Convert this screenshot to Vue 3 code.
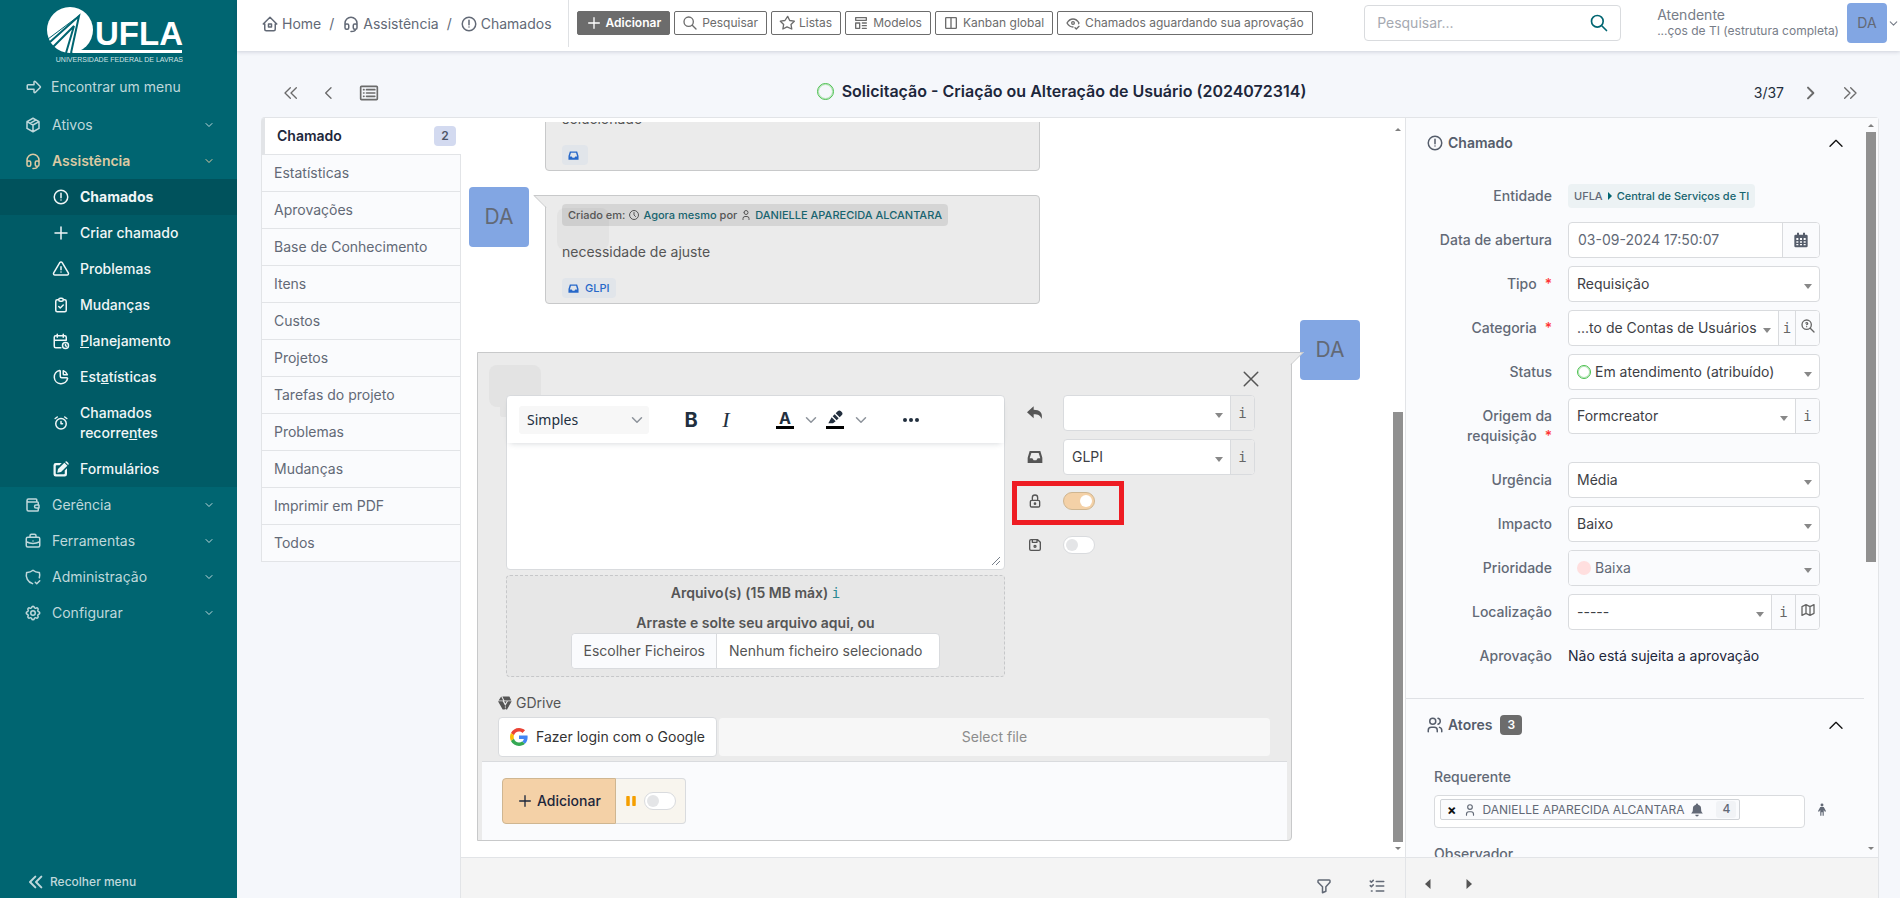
<script setup>
import { h, ref } from 'vue'

const shapes = {
  home: 'M5 12H3l9-9l9 9h-2M5 12v7a2 2 0 0 0 2 2h10a2 2 0 0 0 2-2v-7M10 12h4v4h-4z',
  headset: 'M4 14v-3a8 8 0 1 1 16 0v3M18 19c0 1.657-2.686 3-6 3M4 14a2 2 0 0 1 2-2h1a2 2 0 0 1 2 2v3a2 2 0 0 1-2 2H6a2 2 0 0 1-2-2zM15 14a2 2 0 0 1 2-2h1a2 2 0 0 1 2 2v3a2 2 0 0 1-2 2h-1a2 2 0 0 1-2-2z',
  alert: 'M3 12a9 9 0 1 0 18 0a9 9 0 1 0-18 0M12 7v6M12 16h.01',
  arrow: 'M4 9h8V5.414a1 1 0 0 1 1.707-.707l6.586 6.586a1 1 0 0 1 0 1.414l-6.586 6.586A1 1 0 0 1 12 18.586V15H4a1 1 0 0 1-1-1v-4a1 1 0 0 1 1-1z',
  package: 'M12 3l8 4.5v9L12 21l-8-4.5v-9zM12 12l8-4.5M12 12v9M12 12L4 7.5M16 5.25l-8 4.5',
  plus: 'M12 4v16M4 12h16',
  triangle: 'M12 9v4M10.363 3.591L2.257 17.125a1.914 1.914 0 0 0 1.636 2.871h16.214a1.914 1.914 0 0 0 1.636-2.87L13.637 3.59a1.914 1.914 0 0 0-3.274 0zM12 16h.01',
  clipboard: 'M9 5H7a2 2 0 0 0-2 2v12a2 2 0 0 0 2 2h10a2 2 0 0 0 2-2V7a2 2 0 0 0-2-2h-2M9 5a2 2 0 0 1 2-2h2a2 2 0 0 1 0 4h-2a2 2 0 0 1-2-2zM9 14l2 2l4-4',
  calendar: 'M11.795 21H5a2 2 0 0 1-2-2V7a2 2 0 0 1 2-2h12a2 2 0 0 1 2 2v4M14 18a4 4 0 1 0 8 0a4 4 0 1 0-8 0M15 3v4M7 3v4M3 11h16M18 16.5V18l1 1',
  pie: 'M10 3.2A9 9 0 1 0 20.8 14a1 1 0 0 0-1-1H13a2 2 0 0 1-2-2V4a.9.9 0 0 0-1-.8M15 3.5A9 9 0 0 1 20.5 9H16a1 1 0 0 1-1-1z',
  alarm: 'M5 13a7 7 0 1 0 14 0a7 7 0 1 0-14 0M12 10v3h2M7 4L4.25 6M17 4l2.75 2',
  wallet: 'M17 8V5a1 1 0 0 0-1-1H6a2 2 0 0 0 0 4h12a1 1 0 0 1 1 1v3m0 4v3a1 1 0 0 1-1 1H6a2 2 0 0 1-2-2V6M20 12v4h-4a2 2 0 0 1 0-4z',
  briefcase: 'M3 9a2 2 0 0 1 2-2h14a2 2 0 0 1 2 2v9a2 2 0 0 1-2 2H5a2 2 0 0 1-2-2zM8 7V5a2 2 0 0 1 2-2h4a2 2 0 0 1 2 2v2M12 12v.01M3 13a20 20 0 0 0 18 0',
  shield: 'M11.46 20.846A12 12 0 0 1 3.5 6A12 12 0 0 0 12 3a12 12 0 0 0 8.5 3a12 12 0 0 1-.09 7.06M15 19l2 2l4-4',
  gear: 'M10.325 4.317c.426-1.756 2.924-1.756 3.35 0a1.724 1.724 0 0 0 2.573 1.066c1.543-.94 3.31.826 2.37 2.37a1.724 1.724 0 0 0 1.065 2.572c1.756.426 1.756 2.924 0 3.35a1.724 1.724 0 0 0-1.066 2.573c.94 1.543-.826 3.31-2.37 2.37a1.724 1.724 0 0 0-2.572 1.065c-.426 1.756-2.924 1.756-3.35 0a1.724 1.724 0 0 0-2.573-1.066c-1.543.94-3.31-.826-2.37-2.37a1.724 1.724 0 0 0-1.065-2.572c-1.756-.426-1.756-2.924 0-3.35a1.724 1.724 0 0 0 1.066-2.573c-.94-1.543.826-3.31 2.37-2.37c1 .608 2.296.07 2.572-1.065zM9 12a3 3 0 1 0 6 0a3 3 0 0 0-6 0',
  search: 'M3 10a7 7 0 1 0 14 0a7 7 0 1 0-14 0M21 21l-6-6',
  star: 'M12 17.75l-6.172 3.245l1.179-6.873l-5-4.867l6.9-1L12.993 2l3.086 6.253l6.9 1l-5 4.867l1.179 6.873z',
  template: 'M4 4h16v4H4zM4 12h6v8H4zM14 12h6M14 16h6M14 20h6',
  columns: 'M5 4h14a1 1 0 0 1 1 1v14a1 1 0 0 1-1 1H5a1 1 0 0 1-1-1V5a1 1 0 0 1 1-1zM12 4v16',
  eye: 'M10 12a2 2 0 1 0 4 0a2 2 0 0 0-4 0M12 18c-3.6 0-6.6-2-9-6c2.4-4 5.4-6 9-6c3.6 0 6.6 2 9 6l-.7 1.1M15 19l2 2l4-4',
  down: 'M6 9l6 6l6-6',
  up: 'M3 17l9-9l9 9',
  left: 'M15 4l-8 8l8 8',
  right: 'M9 4l8 8l-8 8',
  first: 'M11 4l-8 8l8 8M20 4l-8 8l8 8',
  last: 'M4 4l8 8l-8 8M13 4l8 8l-8 8',
  list: 'M3 4h18a1 1 0 0 1 1 1v14a1 1 0 0 1-1 1H3a1 1 0 0 1-1-1V5a1 1 0 0 1 1-1zM9 8h10M9 12h10M9 16h10M5.5 8h.5M5.5 12h.5M5.5 16h.5',
  close: 'M3 3l18 18M21 3L3 21',
  user: 'M8 7a4 4 0 1 0 8 0a4 4 0 0 0-8 0M6 21v-2a4 4 0 0 1 4-4h4a4 4 0 0 1 4 4v2',
  users: 'M5 7a4 4 0 1 0 8 0a4 4 0 1 0-8 0M3 21v-2a4 4 0 0 1 4-4h4a4 4 0 0 1 4 4v2M16 3.13a4 4 0 0 1 0 7.75M21 21v-2a4 4 0 0 0-3-3.85',
  clock: 'M3 12a9 9 0 1 0 18 0a9 9 0 1 0-18 0M12 7v5l3 3',
  lock: 'M5 13a2 2 0 0 1 2-2h10a2 2 0 0 1 2 2v6a2 2 0 0 1-2 2H7a2 2 0 0 1-2-2zM11 16a1 1 0 1 0 2 0a1 1 0 0 0-2 0M8 11V7a4 4 0 1 1 8 0v4',
  save: 'M6 4h10l4 4v10a2 2 0 0 1-2 2H6a2 2 0 0 1-2-2V6a2 2 0 0 1 2-2M10.500 14a1.500 1.500 0 1 0 3 0a1.500 1.500 0 1 0-3 0M15 4v4H8V4',
  filter: 'M5 4h14a1 1 0 0 1 1 1v2l-5.500 6v6L10 21v-8L4 7V5a1 1 0 0 1 1-1z',
  tasks: 'M3 5.500L4.500 7L7 4.500M3 11.500L4.500 13L7 10.500M4.500 18.500h1M11 6h10M11 12h10M11 18.500h10',
  zoomq: 'M3 10a7 7 0 1 0 14 0a7 7 0 1 0-14 0M21 21l-6-6M10 13v.01M10 10a1.500 1.500 0 1 0-1.140-2.474',
  map: 'M3 7l6-3l6 3l6-3v13l-6 3l-6-3l-6 3zM9 4v13M15 7v13',
}
const solid = {
  inbox: 'M4 3h16l3 10v8H1V13zM6.500 6L4 14h4l2 3h4l2-3h4l-2.500-8z',
  reply: 'M10 2v5c9 0 14 4 12 14c-2-5-5-7-12-7v6L0 11z',
  calgrid: 'M6 1h3v3h6V1h3v3h2a2 2 0 0 1 2 2v15a2 2 0 0 1-2 2H4a2 2 0 0 1-2-2V6a2 2 0 0 1 2-2h2zM5 9v3h3V9zM10.500 9v3h3V9zM16 9v3h3V9zM5 14v2h3v-2zM10.500 14v2h3v-2zM16 14v2h3v-2zM5 18v2h3v-2zM10.500 18v2h3v-2zM16 18v2h3v-2z',
  bell: 'M12 1a2 2 0 0 1 2 2c4 1 5 4 5 7c0 5 1 6 3 8H2c2-2 3-3 3-8c0-3 1-6 5-7a2 2 0 0 1 2-2zM9 20h6a3 3 0 0 1-6 0z',
  person: 'M12 1a2.500 2.500 0 1 1 0 5a2.500 2.500 0 0 1 0-5zM9 7h6l4 7l-2 1l-2-3v10h-2v-6h-2v6H9V12l-2 3l-2-1z',
  edit: 'M5 4h8l-3 3H6a1 1 0 0 0-1 1v10a1 1 0 0 0 1 1h10a1 1 0 0 0 1-1v-4l3-3v8a3 3 0 0 1-3 3H5a3 3 0 0 1-3-3V7a3 3 0 0 1 3-3zM8 12l8.500-8.500l4 4L12 16l-5 1zM17.500 2.500c1-1 2-1 3 0l1 1c1 1 1 2 0 3z',
  drive: 'M5.500 1L9 7.500H1zM7.500 1h12l3.500 6.500H11zM0 9h8l5.500 10l-2 4H8zM23.500 9L15.500 23h-2l-2-4L17 9zM10.500 9h4.500l-2.200 4z',
  pencil: 'M2 20l5-9l6 6l-4 3zM8.500 9.500l3-3l6 6l-3 3zM13 5l3-3a3.500 3.500 0 0 1 5 0l1 1a3.500 3.500 0 0 1 0 5l-3 3z',
  tleft: 'M17 2v20L6 12z',
  tright: 'M7 2v20l11-10z',
  pause: 'M4 2h4a1.500 1.500 0 0 1 1.500 1.500v17A1.500 1.500 0 0 1 8 22H4a1.500 1.500 0 0 1-1.500-1.500v-17A1.500 1.500 0 0 1 4 2zM16 2h4a1.500 1.500 0 0 1 1.500 1.500v17A1.500 1.500 0 0 1 20 22h-4a1.500 1.500 0 0 1-1.500-1.500v-17A1.500 1.500 0 0 1 16 2z',
}

function Icon(props) {
  const fill = solid[props.name]
  return h('svg', {
    width: props.size || 18, height: props.size || 18, viewBox: '0 0 24 24', 'aria-hidden': 'true',
    fill: fill ? 'currentColor' : 'none', 'fill-rule': 'evenodd', stroke: fill ? 'none' : 'currentColor',
    'stroke-width': props.weight || 2, 'stroke-linecap': 'round', 'stroke-linejoin': 'round',
  }, [h('path', { d: fill || shapes[props.name] })])
}
Icon.props = ['name', 'size', 'weight']

const submenu = [
  { icon: 'alert', text: ['Chamados', '', ''], active: true },
  { icon: 'plus', text: ['Criar chamado', '', ''] },
  { icon: 'triangle', text: ['Problemas', '', ''] },
  { icon: 'clipboard', text: ['Mudanças', '', ''] },
  { icon: 'calendar', text: ['', 'P', 'lanejamento'] },
  { icon: 'pie', text: ['Est', 'a', 'tísticas'] },
  { icon: 'alarm', text: ['Chamados recorre', 'n', 'tes'] },
  { icon: 'edit', text: ['Formulários', '', ''] },
]
const lowerMenu = [
  { icon: 'wallet', text: 'Gerência' },
  { icon: 'briefcase', text: 'Ferramentas' },
  { icon: 'shield', text: 'Administração' },
  { icon: 'gear', text: 'Configurar' },
]
const actions = [
  { icon: 'plus', text: 'Adicionar', filled: true },
  { icon: 'search', text: 'Pesquisar' },
  { icon: 'star', text: 'Listas' },
  { icon: 'template', text: 'Modelos' },
  { icon: 'columns', text: 'Kanban global' },
  { icon: 'eye', text: 'Chamados aguardando sua aprovação' },
]
const tabs = ['Estatísticas', 'Aprovações', 'Base de Conhecimento', 'Itens', 'Custos', 'Projetos', 'Tarefas do projeto', 'Problemas', 'Mudanças', 'Imprimir em PDF', 'Todos']
const fields = [
  { id: 'tipo', label: 'Tipo', required: true, value: 'Requisição' },
  { id: 'categoria', label: 'Categoria', required: true, value: '...to de Contas de Usuários', info: 'narrow', extra: 'zoomq' },
  { id: 'status', label: 'Status', value: 'Em atendimento (atribuído)', dot: 'ring' },
  { id: 'origem', label: 'Origem da requisição', required: true, value: 'Formcreator', info: 'wide' },
  { id: 'urgencia', label: 'Urgência', value: 'Média' },
  { id: 'impacto', label: 'Impacto', value: 'Baixo' },
  { id: 'prioridade', label: 'Prioridade', value: 'Baixa', dot: 'pink', disabled: true },
  { id: 'local', label: 'Localização', value: '-----', info: 'wide', extra: 'map' },
]
const isPrivate = ref(true)
const saveTemplate = ref(false)
const pending = ref(false)
</script>

<template>
  <div class="app">
    <aside class="sidebar">
      <a href="#" class="logo" aria-label="UFLA">
        <svg width="136" height="56" viewBox="0 0 136 56">
          <circle cx="23" cy="23" r="23" fill="#fff" />
          <g fill="none" stroke="#006571" stroke-width="2">
            <path d="M3 35L32 9L24 46M6 40L27 19L19 46" />
            <path d="M1 32L33 8" stroke-width="1" />
          </g>
          <text x="48" y="38" class="logo-name">UFLA</text>
          <path d="M26 43h109v3H26z" fill="#fff" />
          <text x="136" y="55" text-anchor="end" class="logo-caption">UNIVERSIDADE FEDERAL DE LAVRAS</text>
        </svg>
      </a>
      <nav class="menu" aria-label="Principal">
        <a href="#" class="find"><Icon name="arrow" />Encontrar um menu</a>
        <a href="#" class="item"><Icon name="package" /><span>Ativos</span><Icon name="down" size="12" /></a>
        <a href="#" class="item current"><Icon name="headset" /><span>Assistência</span><Icon name="down" size="12" /></a>
        <div class="submenu">
          <a v-for="s in submenu" :key="s.icon" href="#" :class="{ active: s.active }">
            <Icon :name="s.icon" /><span class="subtext">{{ s.text[0] }}<u>{{ s.text[1] }}</u>{{ s.text[2] }}</span>
          </a>
        </div>
        <a v-for="m in lowerMenu" :key="m.text" href="#" class="item"><Icon :name="m.icon" /><span>{{ m.text }}</span><Icon name="down" size="12" /></a>
      </nav>
      <button class="collapse"><Icon name="first" size="16" weight="3" />Recolher menu</button>
    </aside>

    <div class="page">
      <header class="topbar">
        <nav class="crumbs" aria-label="Trilha">
          <a href="#"><Icon name="home" />Home</a><span>/</span>
          <a href="#"><Icon name="headset" />Assistência</a><span>/</span>
          <a href="#"><Icon name="alert" />Chamados</a>
        </nav>
        <div class="actions">
          <button v-for="a in actions" :key="a.text" :class="{ filled: a.filled }"><Icon :name="a.icon" size="16" />{{ a.text }}</button>
        </div>
        <form class="search" @submit.prevent>
          <input type="search" placeholder="Pesquisar..." aria-label="Pesquisar">
          <button aria-label="Buscar"><Icon name="search" size="20" /></button>
        </form>
        <a href="#" class="account">
          <span class="who"><span>Atendente</span><small>...ços de TI (estrutura completa)</small></span>
          <span class="avatar small">DA</span><Icon name="down" size="13" />
        </a>
      </header>

      <div class="pager">
        <div class="nav-left">
          <button aria-label="Primeiro"><Icon name="first" size="16" /></button>
          <button aria-label="Anterior"><Icon name="left" size="16" /></button>
          <button aria-label="Lista"><Icon name="list" size="20" /></button>
        </div>
        <h1><i class="ring"></i>Solicitação - Criação ou Alteração de Usuário (2024072314)</h1>
        <div class="nav-right">
          <span>3/37</span>
          <button aria-label="Próximo"><Icon name="right" size="16" weight="3" /></button>
          <button aria-label="Último"><Icon name="last" size="16" /></button>
        </div>
      </div>

      <main class="card">
        <nav class="tabs" aria-label="Seções">
          <a href="#" class="tab selected">Chamado <span>2</span></a>
          <a v-for="t in tabs" :key="t" href="#" class="tab">{{ t }}</a>
        </nav>

        <section class="timeline">
          <div class="scrollrow">
            <div class="feed">
              <article class="message">
                <div class="avatar blank"></div>
                <div class="bubble">
                  <p>solucionado</p>
                  <span class="source"><Icon name="inbox" size="11" /></span>
                </div>
              </article>
              <article class="message">
                <div class="avatar">DA</div>
                <div class="bubble pointed">
                  <i class="ghost"></i>
                  <svg class="pointer" width="14" height="14" viewBox="0 0 14 14"><path d="M0 0h14v13z" fill="#ebebeb" /><path d="M14 .5H1L13 12.500" fill="none" stroke="#c8c9ca" /></svg>
                  <div class="meta">Criado em: <Icon name="clock" size="12" /><a href="#">Agora mesmo</a> por <Icon name="user" size="12" /><a href="#">DANIELLE APARECIDA ALCANTARA</a></div>
                  <p>necessidade de ajuste</p>
                  <span class="source"><Icon name="inbox" size="11" />GLPI</span>
                </div>
              </article>
              <div class="reply">
                <form class="composer" @submit.prevent>
                  <i class="ghost"></i>
                  <svg class="pointer" width="14" height="14" viewBox="0 0 14 14"><path d="M14 0H0v13z" fill="#ebebeb" /><path d="M0 .5h13L1 12.500" fill="none" stroke="#c8c9ca" /></svg>
                  <div class="head"><button type="button" aria-label="Fechar"><Icon name="close" size="18" /></button></div>
                  <div class="body">
                    <div class="writing">
                      <div class="editor">
                        <div class="toolbar">
                          <div class="format"><select aria-label="Formato"><option>Simples</option></select><Icon name="down" size="18" /></div>
                          <button type="button" class="bold" aria-label="Negrito">B</button>
                          <button type="button" class="italic" aria-label="Itálico">I</button>
                          <button type="button" class="ink" aria-label="Cor do texto">A</button>
                          <button type="button" class="arrow" aria-label="Cores do texto"><Icon name="down" size="18" /></button>
                          <button type="button" class="ink" aria-label="Cor de fundo"><Icon name="pencil" size="16" /></button>
                          <button type="button" class="arrow" aria-label="Cores de fundo"><Icon name="down" size="18" /></button>
                          <button type="button" class="more" aria-label="Mais"><i></i><i></i><i></i></button>
                        </div>
                        <textarea aria-label="Descrição"></textarea>
                        <svg class="grip" width="10" height="10" viewBox="0 0 10 10"><path d="M1 9l8-8M5 9l4-4" stroke="#777f8a" fill="none" /></svg>
                      </div>
                      <div class="drop">
                        <strong>Arquivo(s) (15 MB máx) <span class="info">i</span></strong>
                        <strong>Arraste e solte seu arquivo aqui, ou</strong>
                        <div class="file"><button type="button">Escolher Ficheiros</button><span>Nenhum ficheiro selecionado</span></div>
                      </div>
                    </div>
                    <div class="options">
                      <div class="option"><Icon name="reply" size="16" />
                        <div class="group"><div class="pick"><select aria-label="Modelo"><option></option></select></div><button type="button" class="addon info">i</button></div>
                      </div>
                      <div class="option"><Icon name="inbox" size="16" />
                        <div class="group"><div class="pick"><select aria-label="Origem"><option>GLPI</option></select></div><button type="button" class="addon info">i</button></div>
                      </div>
                      <div class="option marked"><Icon name="lock" /><input v-model="isPrivate" class="switch" type="checkbox" aria-label="Privado"></div>
                      <div class="option"><Icon name="save" /><input v-model="saveTemplate" class="switch" type="checkbox" aria-label="Salvar na base"></div>
                    </div>
                  </div>
                  <div class="gdrive"><Icon name="drive" size="14" />GDrive</div>
                  <div class="google">
                    <button type="button">
                      <svg width="18" height="18" viewBox="0 0 48 48" aria-hidden="true"><path fill="#ea4335" d="M24 9.500c3.540 0 6.710 1.220 9.210 3.600l6.850-6.850C35.900 2.380 30.470 0 24 0 14.620 0 6.510 5.380 2.560 13.220l7.980 6.190C12.430 13.720 17.740 9.500 24 9.500z" /><path fill="#4285f4" d="M46.980 24.550c0-1.570-.15-3.090-.38-4.550H24v9.020h12.940c-.58 2.960-2.260 5.480-4.780 7.180l7.730 6c4.510-4.180 7.090-10.360 7.090-17.650z" /><path fill="#fbbc05" d="M10.530 28.590c-.48-1.450-.76-2.990-.76-4.590s.27-3.140.76-4.590l-7.980-6.190C.92 16.460 0 20.120 0 24c0 3.880.92 7.540 2.560 10.780z" /><path fill="#34a853" d="M24 48c6.480 0 11.930-2.130 15.890-5.810l-7.730-6c-2.150 1.450-4.920 2.300-8.160 2.300-6.260 0-11.570-4.220-13.470-9.910l-7.980 6.190C6.510 42.620 14.620 48 24 48z" /></svg>
                      Fazer login com o Google
                    </button>
                    <button type="button" disabled>Select file</button>
                  </div>
                  <div class="submit">
                    <button class="add"><Icon name="plus" size="16" />Adicionar</button>
                    <label class="pending"><Icon name="pause" size="12" /><input v-model="pending" class="switch" type="checkbox" aria-label="Pendente"></label>
                  </div>
                </form>
                <div class="avatar">DA</div>
              </div>
            </div>
            <div class="scrollbar at-end" aria-hidden="true"><b></b><i></i><b class="end"></b></div>
          </div>
          <footer class="bar tools">
            <button aria-label="Filtrar"><Icon name="filter" /></button>
            <button aria-label="Tarefas"><Icon name="tasks" /></button>
          </footer>
        </section>

        <section class="details">
          <div class="scrollrow">
            <div class="panels">
              <h2><Icon name="alert" />Chamado<button aria-label="Recolher chamado"><Icon name="up" size="16" /></button></h2>
              <div class="fields">
                <div class="field"><span class="label">Entidade</span><div class="cell"><span class="entity">UFLA <i></i><a href="#">Central de Serviços de TI</a></span></div></div>
                <div class="field"><label class="label" for="data">Data de abertura</label><div class="group"><input id="data" class="text" value="03-09-2024 17:50:07"><button class="addon date" aria-label="Calendário"><Icon name="calgrid" size="16" /></button></div></div>
                <div v-for="f in fields" :key="f.id" class="field">
                  <label class="label" :for="f.id">{{ f.label }}<em v-if="f.required">*</em></label>
                  <div class="group">
                    <div class="pick" :class="{ off: f.disabled }"><i v-if="f.dot" :class="f.dot"></i><select :id="f.id" :disabled="f.disabled"><option>{{ f.value }}</option></select></div>
                    <button v-if="f.info" class="addon info" :class="f.info">i</button>
                    <button v-if="f.extra" class="addon extra" aria-label="Abrir"><Icon :name="f.extra" size="16" /></button>
                  </div>
                </div>
                <div class="field"><span class="label">Aprovação</span><span class="cell plain">Não está sujeita a aprovação</span></div>
              </div>
              <h2 class="second"><Icon name="users" />Atores<span class="count">3</span><button aria-label="Recolher atores"><Icon name="up" size="16" /></button></h2>
              <div class="actors">
                <span class="label">Requerente</span>
                <div class="actor">
                  <div class="box"><span class="tag"><button aria-label="Remover">×</button><Icon name="user" size="14" />DANIELLE APARECIDA ALCANTARA<Icon name="bell" size="14" /><span class="four">4</span></span></div>
                  <button aria-label="Atribuir a mim"><Icon name="person" size="14" /></button>
                </div>
                <span class="label">Observador</span>
              </div>
            </div>
            <div class="scrollbar" aria-hidden="true"><b></b><i></i><b class="end"></b></div>
          </div>
          <footer class="bar steps">
            <button aria-label="Voltar"><Icon name="tleft" size="12" /></button>
            <button aria-label="Avançar"><Icon name="tright" size="12" /></button>
          </footer>
        </section>
      </main>
    </div>
  </div>
</template>

<style>
body { margin: 0; overflow: hidden; }
</style>

<style scoped>
*, *::before, *::after { box-sizing: border-box; }
.app { display: flex; height: 100vh; font: 14px/20px Inter, "Liberation Sans", sans-serif; color: #626976; background: #f5f7fb; }
a { color: inherit; text-decoration: none; }
button, input, select, textarea { font: inherit; color: inherit; background: none; border: 0; padding: 0; margin: 0; outline: 0; }
select { appearance: none; }
svg { flex: none; }

.sidebar { width: 237px; flex: none; background: #006571; color: #bfd8db; display: flex; flex-direction: column; }
.logo { padding: 7px 0 0 47px; height: 69px; }
.logo svg { display: block; }
.logo-name { font: bold 33px "Liberation Sans", sans-serif; fill: #fff; }
.logo-caption { font: 7px "Liberation Sans", sans-serif; fill: #cfe3e5; }
.menu { flex: 1; }
.find { display: flex; align-items: center; gap: 8px; height: 36px; padding-left: 25px; margin-bottom: 2px; }
.item { display: flex; align-items: center; gap: 10px; height: 36px; padding: 0 22px 0 24px; }
.item span { flex: 1; }
.current { color: #dccaa3; font-weight: 600; }
.submenu { background: #005b66; color: #f0f6f7; font-weight: 500; }
.submenu a { display: flex; align-items: center; gap: 10px; min-height: 36px; padding: 8px 24px 8px 52px; }
.submenu .active { background: #00525c; font-weight: 700; }
.subtext { width: 120px; }
.collapse { display: flex; align-items: center; gap: 6px; height: 32px; padding-left: 28px; font-size: 12px; font-weight: 500; }

.page { flex: 1; min-width: 0; display: flex; flex-direction: column; }
.topbar { height: 51px; flex: none; display: flex; align-items: flex-start; background: #fff; box-shadow: 0 1px 4px rgba(30, 40, 70, .18); z-index: 1; white-space: nowrap; }
.crumbs { display: flex; align-items: center; gap: 8px; height: 47px; padding: 0 16px 0 24px; border-right: 1px solid #dfe1e4; }
.crumbs a { display: flex; align-items: center; gap: 3px; }
.actions { display: flex; gap: 4px; padding: 11px 0 0 8px; }
.actions button { height: 24px; display: flex; align-items: center; gap: 4px; padding: 0 8px 0 7px; border: 1px solid #6c6c6c; border-radius: 2px; font-size: 12px; color: #6c6c6c; }
.actions .filled { background: #6c6c6c; color: #fff; font-weight: 600; padding: 0 8px; }
.search { margin: 5px 36px 0 auto; width: 257px; height: 36px; display: flex; border: 1px solid #d9dbde; border-radius: 4px; }
.search input { flex: 1; min-width: 0; padding-left: 12px; }
.search input::placeholder { color: #a5a9b1; }
.search button { width: 42px; color: #006571; display: flex; align-items: center; justify-content: center; }
.account { display: flex; align-items: center; margin-top: 3px; height: 40px; color: #777d88; }
.who { display: flex; flex-direction: column; line-height: 16px; margin-right: 8px; }
.who small { font-size: 12px; }
.avatar { width: 60px; height: 60px; flex: none; border-radius: 4px; background: #82a6e3; color: #626976; font-size: 21px; display: flex; align-items: center; justify-content: center; }
.avatar.small { width: 40px; height: 40px; font-size: 14px; }
.avatar.blank { background: none; }

.pager { height: 66px; flex: none; display: flex; align-items: center; justify-content: space-between; padding: 18px 42px 0 46px; }
.pager button { display: flex; }
.nav-left, .nav-right { display: flex; align-items: center; gap: 24px; width: 160px; }
.nav-left { width: 142px; gap: 22px; color: #6b6b6b; }
.nav-right { justify-content: flex-end; color: #6b6b6b; }
.nav-right span { color: #232e3c; margin-right: -6px; }
h1 { font-size: 16px; line-height: 20px; font-weight: 600; color: #1d273b; margin: 0 0 4px; display: flex; align-items: center; gap: 8px; white-space: nowrap; }
.ring { width: 14px; height: 14px; flex: none; border: 1px solid #49bf4d; border-radius: 50%; box-shadow: inset 0 0 0 1px #b8e6ba; }
h1 .ring { width: 17px; height: 17px; }

.card { flex: 1; min-height: 0; display: flex; margin: 0 21px 0 24px; border-top: 1px solid #e2e4e7; border-right: 1px solid #e2e4e7; border-radius: 4px 4px 0 0; }
.tabs { width: 200px; flex: none; border-right: 1px solid #e2e4e7; }
.tab { display: flex; align-items: center; height: 37px; padding: 0 4px 0 12px; background: #fafbfd; border: 1px solid #e2e4e7; border-width: 0 0 1px 1px; }
.tab.selected { background: #fff; border-left: 4px solid #e2e4e7; border-top-left-radius: 4px; color: #1d273b; font-weight: 600; justify-content: space-between; margin-right: -1px; padding-right: 5px; }
.tab span { width: 22px; height: 20px; border-radius: 4px; background: #d3daf0; color: #4e5668; font-size: 12px; text-align: center; }
.timeline { flex: 2; min-width: 0; display: flex; flex-direction: column; background: #fff; }
.details { flex: 1; min-width: 0; display: flex; flex-direction: column; background: #fafbfd; border-left: 1px solid #e2e4e7; }
.scrollrow { flex: 1; min-height: 0; display: flex; }
.scrollbar { width: 14px; flex: none; display: flex; flex-direction: column; align-items: center; padding: 6px 0 7px; }
.scrollbar i { width: 10px; height: 430px; margin: 5px 0 auto; background: #909090; }
.scrollbar b { border: 3px solid transparent; border-width: 0 3px 3px; border-bottom-color: #808080; }
.scrollbar .end { border-width: 3px 3px 0; border-top-color: #808080; }
.at-end { padding-top: 10px; }
.at-end i { margin: auto 0 5px; }
.bar { height: 41px; flex: none; border-top: 1px solid #e2e4e7; background: #f4f4f4; display: flex; align-items: flex-start; }
.bar button { display: flex; }
.tools { justify-content: flex-end; gap: 35px; padding: 19px 19px 0 0; }
.steps { gap: 29px; padding: 20px 0 0 16px; color: #555; }

.feed { flex: 1; min-width: 0; margin-top: 4px; overflow: hidden; display: flex; flex-direction: column; justify-content: flex-end; gap: 16px; padding: 0 31px 16px 8px; color: #555; }
.message, .reply { display: flex; flex: none; }
.message { gap: 16px; }
.bubble { position: relative; width: 495px; margin-top: 8px; padding: 8px 16px 5px; background: #ebebeb; border: 1px solid #c8c9ca; border-radius: 4px; }
.pointed { border-top-left-radius: 0; }
.bubble .pointer { position: absolute; top: -1px; left: -13px; }
.ghost { position: absolute; top: 12px; left: 11px; width: 52px; height: 42px; border-radius: 8px; background: #e3e3e3; }
.ghost::after { content: ""; position: absolute; left: 11px; top: 40px; width: 14px; height: 12px; background: #e3e3e3; border-radius: 0 0 8px 2px; }
.bubble p { position: relative; margin: 16px 0; }
.meta { position: relative; display: inline-flex; align-items: center; gap: 3px; height: 22px; padding: 0 6px; border-radius: 4px; background: rgba(0, 0, 0, .09); font-size: 11px; font-weight: 500; white-space: nowrap; vertical-align: top; }
.meta a { color: #17646f; }
.source { display: inline-flex; align-items: center; gap: 6px; height: 20px; min-width: 26px; padding: 0 6px; border-radius: 4px; background: #e1e5ea; color: #2768c9; font-size: 11px; font-weight: 500; vertical-align: top; }
.reply { gap: 8px; padding-left: 8px; }
.composer { position: relative; flex: 1; min-width: 0; margin-top: 32px; background: #ebebeb; border: 1px solid #c8c9ca; border-radius: 0 0 4px 0; }
.composer .pointer { position: absolute; top: -1px; right: -13px; z-index: 1; }
.head { height: 42px; display: flex; justify-content: flex-end; padding: 17px 31px 0 0; }
.head button { height: 18px; }
.body { position: relative; display: flex; gap: 22px; padding: 0 36px 0 28px; }
.writing { flex: 1; min-width: 0; }
.editor { position: relative; height: 175px; display: flex; flex-direction: column; background: #fff; border: 1px solid #d9dbde; border-radius: 4px; margin-bottom: 5px; }
.toolbar { height: 47px; flex: none; display: flex; align-items: center; padding-left: 12px; box-shadow: 0 3px 6px -3px rgba(34, 47, 62, .22); color: #222f3e; }
.format { position: relative; width: 130px; height: 28px; margin-right: 25px; background: #f7f7f7; border-radius: 3px; }
.format select { width: 100%; height: 28px; padding-left: 8px; font: 14px "Noto Sans", sans-serif; color: #222f3e; }
.format svg { position: absolute; right: 3px; top: 5px; color: #8d939b; pointer-events: none; }
.toolbar button { height: 28px; text-align: center; }
.bold { width: 34px; font-size: 20px; font-weight: 700; }
.italic { width: 36px; font: italic 22px/24px "Liberation Serif", serif; margin-right: 28px; }
.toolbar .ink { width: 18px; height: 19px; margin-left: 4px; border-bottom: 3px solid #000; font-size: 16px; line-height: 16px; font-weight: 700; display: flex; justify-content: center; }
.arrow { width: 20px; margin-left: 8px; display: flex; align-items: center; color: #8d939b; }
.more { display: flex; align-items: center; gap: 2px; margin-left: 31px; }
.more i { width: 4px; height: 4px; border-radius: 50%; background: #222f3e; }
textarea { flex: 1; resize: none; padding: 12px; }
.grip { position: absolute; right: 3px; bottom: 3px; }
.drop { display: flex; flex-direction: column; align-items: center; padding: 7px 0; border: 1px dashed #c6c7c9; border-radius: 4px; background: #e7e7e7; }
.drop strong { font-weight: 600; }
.drop strong + strong { margin-top: 10px; }
.info { font: 14px/20px "DejaVu Sans Mono", monospace; }
.drop .info { color: #2d8a93; }
.file { display: flex; height: 36px; background: #fff; border: 1px solid #d9dbde; border-radius: 4px; white-space: nowrap; }
.file button { padding: 0 11px; background: #fafbfd; border-right: 1px solid #d9dbde; border-radius: 4px 0 0 4px; }
.file span { padding: 7px 16px 7px 12px; }
.options { width: 228px; display: flex; flex-direction: column; gap: 8px; }
.option { position: relative; display: flex; align-items: center; height: 36px; }
.option > svg { width: 16px; margin-right: 20px; }
.marked::after { content: ""; position: absolute; left: -15px; top: -2px; width: 112px; height: 44px; border: 5px solid #ee1c23; }
.switch { appearance: none; width: 32px; height: 18px; border: 1px solid #d9dbde; border-radius: 9px; background: #fff; display: flex; align-items: center; padding: 0 2px; }
.switch::before { content: ""; width: 12px; height: 12px; border-radius: 50%; background: #e4e5e7; }
.switch:checked { background: #f4d1a7; border-color: #cfb691; justify-content: flex-end; }
.switch:checked::before { background: #fff; }
.gdrive { display: flex; align-items: center; gap: 4px; margin: 16px 20px 4px; }
.google { display: flex; gap: 1px; height: 40px; margin: 0 20px 4px; }
.google button { display: flex; align-items: center; gap: 8px; padding: 0 11px; background: #fff; border: 1px solid #d9dbde; border-radius: 4px; color: #333; white-space: nowrap; }
.google button:disabled { flex: 1; justify-content: center; background: #f7f7f7; border-color: #ebebeb; color: #8c8c8c; }
.submit { display: flex; margin: 0 4px; padding: 16px 20px; height: 79px; background: #fafbfd; border-top: 1px solid #d9dbde; }
.add { height: 46px; display: flex; align-items: center; gap: 4px; padding: 0 14px; border: 1px solid #cfb691; border-radius: 4px 0 0 4px; background: #f4d1a7; color: #1d273b; font-weight: 500; }
.pending { width: 70px; height: 46px; display: flex; align-items: center; justify-content: center; gap: 7px; border: 1px solid #d9dbde; border-left: 0; border-radius: 0 4px 4px 0; background: #f8f5ee; color: #f59f00; }

.panels { flex: 1; min-width: 0; overflow: hidden; }
h2 { display: flex; align-items: center; gap: 4px; height: 50px; margin: 0; padding: 0 20px; font-size: 14px; font-weight: 600; color: #555d6b; }
h2 button { display: flex; margin-left: auto; color: #111; }
.second { height: 53px; border-top: 1px solid #dfe1e5; }
.count { width: 22px; height: 20px; margin-left: 4px; border-radius: 4px; background: #6c6c6c; color: #fff; font-size: 12px; text-align: center; }
.fields { display: flex; flex-direction: column; gap: 8px; padding: 10px 44px 24px 28px; }
.field { display: grid; grid-template-columns: 118px minmax(0, 1fr); gap: 16px; align-items: start; }
.label { font-weight: 500; }
.field .label { padding: 8px 0; text-align: right; }
.label em { color: #f33; margin-left: 8px; font-style: normal; }
.cell { height: 36px; display: flex; align-items: center; }
.plain { color: #1d273b; }
.entity { height: 24px; display: flex; align-items: center; gap: 5px; padding: 0 6px; border-radius: 4px; background: #ecf2f4; font-size: 11px; font-weight: 500; white-space: nowrap; }
.entity i { border: 4px solid transparent; border-right: 0; border-left-color: #006571; }
.entity a { color: #17646f; }
.group { display: flex; flex: 1; min-width: 0; height: 36px; background: #fff; border: 1px solid #d9dbde; border-radius: 4px; overflow: hidden; }
.text { flex: 1; min-width: 0; padding-left: 9px; }
.pick { position: relative; flex: 1; min-width: 0; display: flex; align-items: center; gap: 4px; padding-left: 8px; color: #3d4045; }
.pick select { flex: 1; min-width: 0; height: 34px; opacity: 1; }
.pick::after { content: ""; position: absolute; right: 7px; top: 17px; border: 4px solid transparent; border-top: 5px solid #888; border-bottom: 0; pointer-events: none; }
.off { background: #fafbfd; color: #626976; }
.pink { width: 14px; height: 14px; border-radius: 50%; background: #ffdfdf; }
.addon { width: 24px; flex: none; border-left: 1px solid #d9dbde; background: #fafbfd; display: flex; align-items: center; justify-content: center; color: #666; }
.narrow { width: 17px; }
.date { width: 37px; color: #555d6b; }
.extra { padding-bottom: 4px; }
.options .addon { background: #ebebeb; }
.actors { padding: 16px 0 0 28px; display: flex; flex-direction: column; gap: 8px; }
.actor { display: flex; align-items: center; gap: 10px; margin-bottom: 8px; }
.box { width: 371px; height: 33px; padding: 3px 5px; background: #fff; border: 1px solid #d9dbde; border-radius: 4px; }
.tag { display: inline-flex; align-items: center; gap: 6px; height: 21px; padding: 0 3px 0 6px; background: #fafbfd; border: 1px solid #d0d3d7; border-radius: 2px; font-size: 12px; white-space: nowrap; vertical-align: top; }
.tag button { color: #111; font-size: 14px; font-weight: 700; }
.four { width: 20px; height: 17px; margin-left: 6px; border-radius: 3px; background: #f1f3f6; line-height: 16px; text-align: center; font-weight: 500; }
</style>
